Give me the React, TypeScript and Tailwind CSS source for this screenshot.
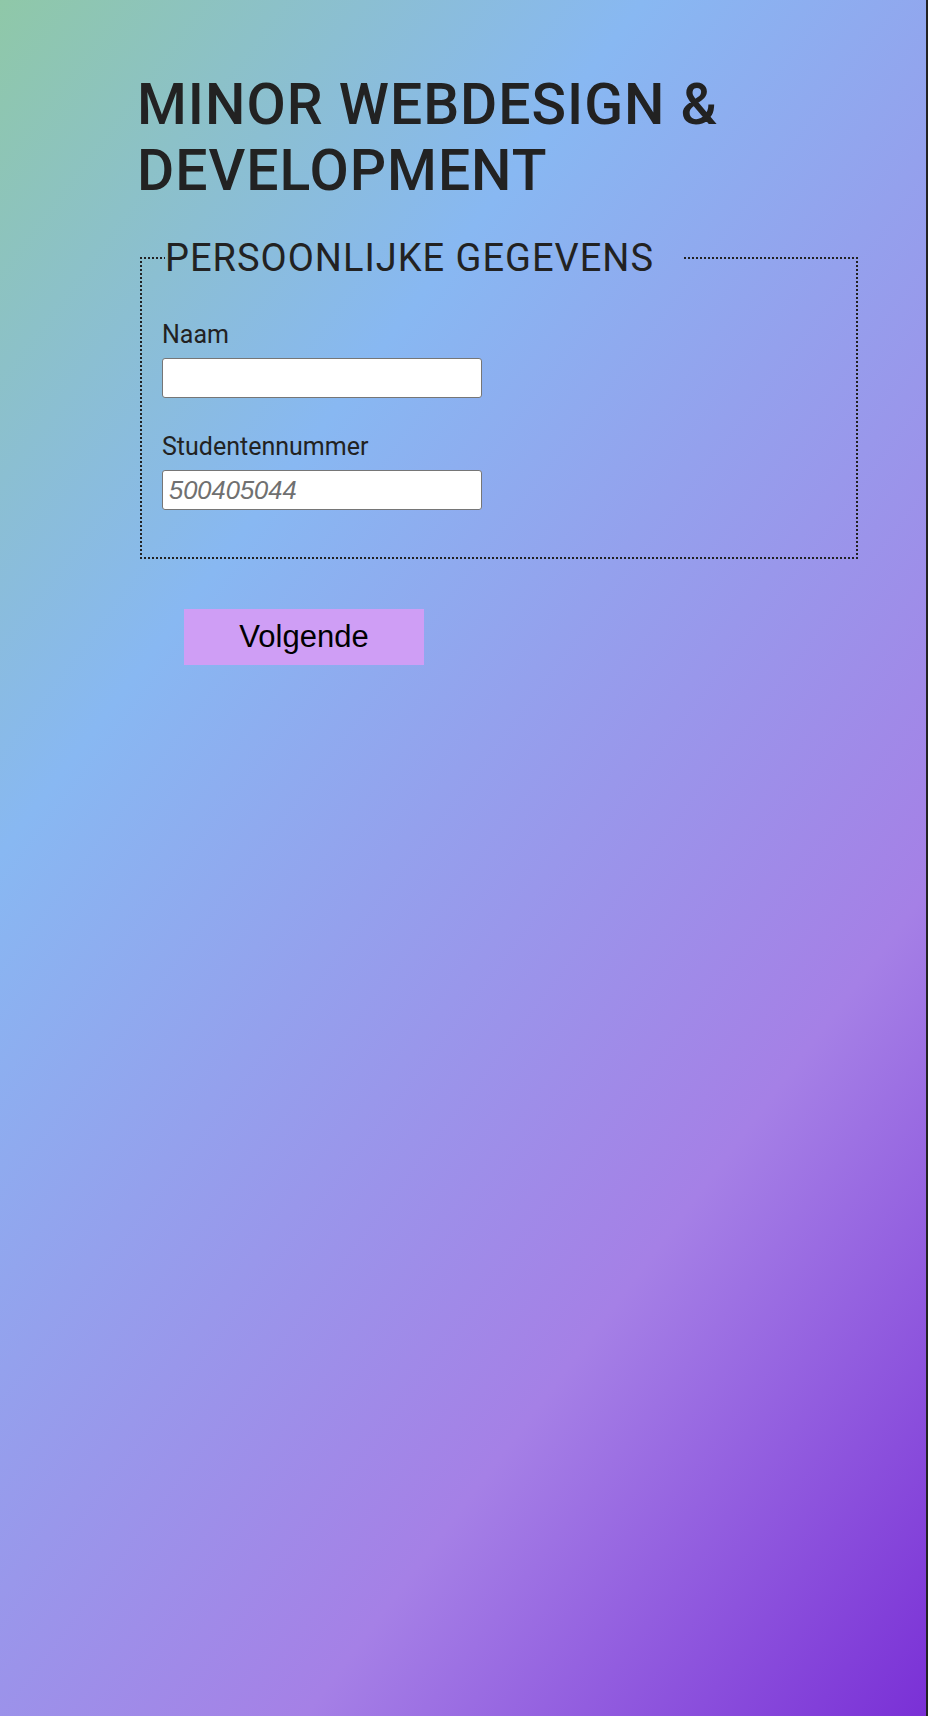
export default function App() {
  return (
    <div className="min-h-[1716px] w-full border-r-2 border-[#222] bg-[linear-gradient(127deg,#8fc8a8_0%,#88b8f2_29%,#a580e6_72%,#7a30d6_100%)] font-['Roboto','Liberation_Sans',sans-serif] text-[#222]">
      <div className="pl-[137px] pr-[68px] pt-[72px]">
        <h1 className="text-[57px] leading-[66px] tracking-[1px] font-medium">
          MINOR WEBDESIGN &amp;
          <br />
          DEVELOPMENT
        </h1>

        <form className="mt-[34px]">
          <fieldset className="ml-[3px] border-2 border-dotted border-[#222] pl-[20px] pb-[47px]">
            <legend className="ml-[3px] pr-[28px] text-[38px] leading-[40px] tracking-[1px]">
              PERSOONLIJKE GEGEVENS
            </legend>

            <div className="mt-[42px] flex flex-col">
              <label htmlFor="naam" className="text-[25px] leading-[30px]">Naam</label>
              <input
                id="naam"
                type="text"
                className="mt-[8px] h-[40px] w-[320px] rounded-[3px] border border-[#767676] bg-white px-2 font-['Liberation_Sans',sans-serif] text-[25px]"
              />
            </div>

            <div className="mt-[34px] flex flex-col">
              <label htmlFor="studentnr" className="text-[25px] leading-[30px]">Studentennummer</label>
              <input
                id="studentnr"
                type="text"
                placeholder="500405044"
                className="mt-[8px] h-[40px] w-[320px] rounded-[3px] border border-[#767676] bg-white px-[6px] font-['Liberation_Sans',sans-serif] text-[25.5px] placeholder:italic placeholder:text-[#707070]"
              />
            </div>
          </fieldset>

          <button
            type="button"
            className="ml-[47px] mt-[50px] h-[56px] w-[240px] bg-[#cf9ef5] font-['Liberation_Sans',sans-serif] text-[31px] text-black"
          >
            Volgende
          </button>
        </form>
      </div>
    </div>
  );
}
